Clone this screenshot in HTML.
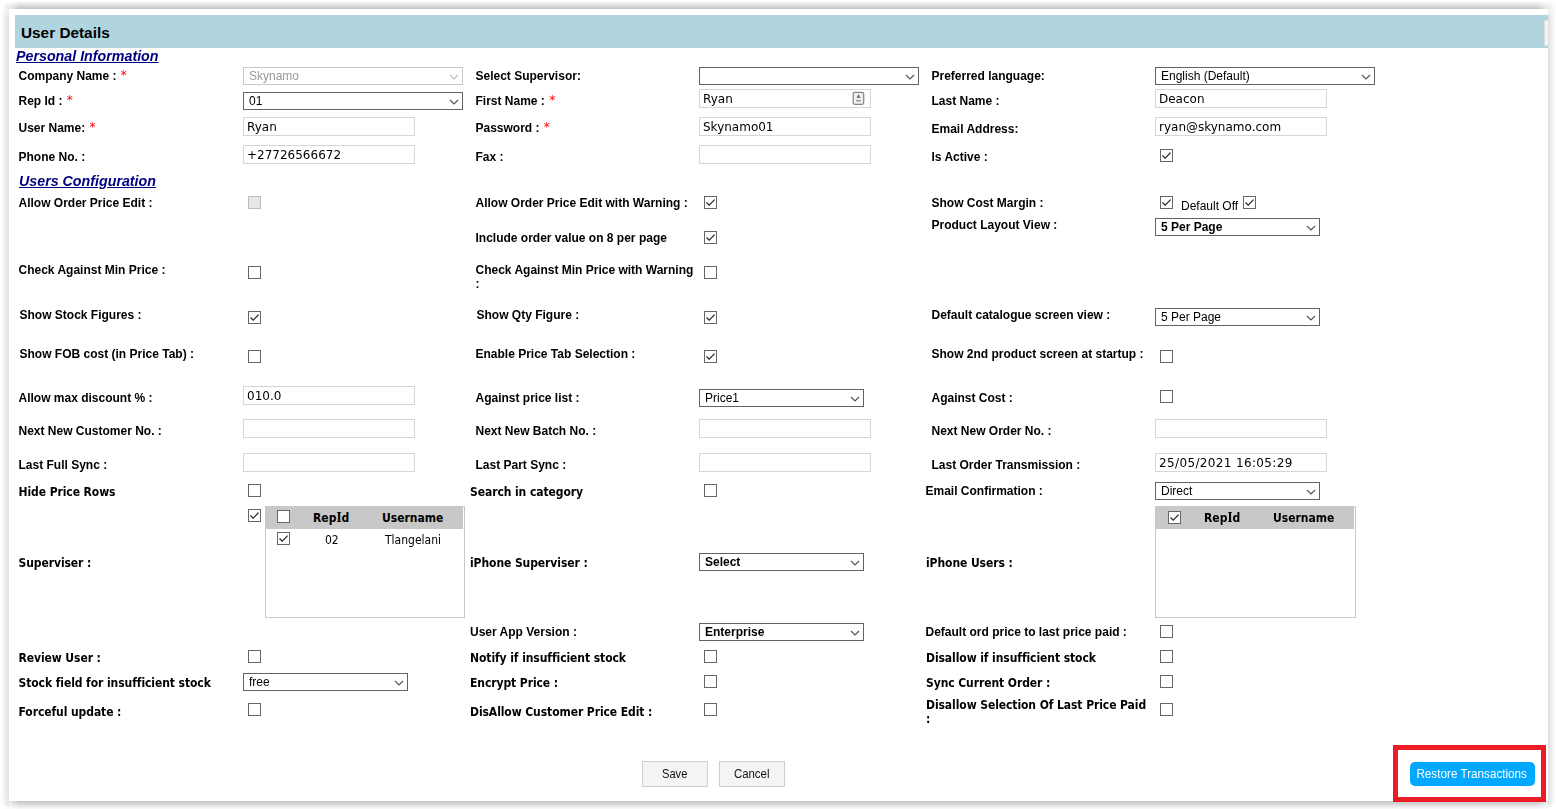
<!DOCTYPE html>
<html lang="en">
<head>
<meta charset="utf-8">
<title>User Details</title>
<style>
html,body{margin:0;padding:0;}
body{width:1556px;height:809px;position:relative;overflow:hidden;background:#fff;font-family:"Liberation Sans",sans-serif;font-size:12px;color:#000;}
#shadow{position:absolute;left:9px;top:9px;width:1539px;height:792px;background:#fff;}
.sh{position:absolute;}
#shT{left:1px;top:1px;width:1555px;height:8px;background:linear-gradient(to top,#c2c2c2,#fff);-webkit-mask-image:linear-gradient(to right,transparent 2px,#000 19px,#000 1536px,transparent 1553px);mask-image:linear-gradient(to right,transparent 2px,#000 19px,#000 1536px,transparent 1553px);}
#shB{left:1px;top:801px;width:1555px;height:8px;background:linear-gradient(to bottom,#c2c2c2,#fbfbfb);-webkit-mask-image:linear-gradient(to right,transparent 2px,#000 19px,#000 1536px,transparent 1553px);mask-image:linear-gradient(to right,transparent 2px,#000 19px,#000 1536px,transparent 1553px);}
#shL{left:1px;top:1px;width:8px;height:808px;background:linear-gradient(to left,#e0e0e0,#fff);mix-blend-mode:multiply;-webkit-mask-image:linear-gradient(to bottom,transparent 2px,#000 16px,#000 796px,transparent 807px);mask-image:linear-gradient(to bottom,transparent 2px,#000 16px,#000 796px,transparent 807px);}
#shR{left:1548px;top:1px;width:8px;height:808px;background:linear-gradient(to right,#e0e0e0,#fff);mix-blend-mode:multiply;-webkit-mask-image:linear-gradient(to bottom,transparent 2px,#000 16px,#000 796px,transparent 807px);mask-image:linear-gradient(to bottom,transparent 2px,#000 16px,#000 796px,transparent 807px);}
#hdr{position:absolute;left:15px;top:15px;width:1533px;height:33px;background:#b0d5de;}
#hdr span{position:absolute;left:6px;top:9px;font-weight:bold;font-size:15.35px;line-height:18px;white-space:nowrap;}
#hdrbox{position:absolute;left:1544px;top:20px;width:4px;height:26px;background:#f4f4f4;border:1px solid #ddd;border-right:0;box-sizing:border-box;}
.sec{position:absolute;font-weight:bold;font-style:italic;text-decoration:underline;color:#000080;font-size:14.25px;line-height:16px;white-space:nowrap;}
.l{position:absolute;font-weight:bold;font-size:12px;line-height:14px;white-space:nowrap;}
.l i{font-style:normal;color:#f00;font-weight:normal;font-family:"DejaVu Sans",sans-serif;font-size:12px;margin-left:1px;position:relative;top:-1px;}
.t{position:absolute;font-family:"DejaVu Sans Condensed","DejaVu Sans",sans-serif;font-weight:bold;font-size:12px;line-height:14px;white-space:nowrap;letter-spacing:-.08px;}
.n{position:absolute;font-size:12px;line-height:14px;white-space:nowrap;}
.in{position:absolute;box-sizing:border-box;height:19px;width:172px;border:1px solid #d6d6d6;background:#fff;font-family:"DejaVu Sans",sans-serif;font-size:12px;line-height:15px;padding:2px 0 0 3px;white-space:nowrap;overflow:hidden;}
.se{position:absolute;box-sizing:border-box;height:18px;border:1px solid #626262;background:#fff;font-size:12px;line-height:15px;padding:1px 0 0 5px;white-space:nowrap;overflow:hidden;}
.se.dis{border-color:#c8c8c8;color:#999;}
.se svg{position:absolute;right:3px;top:6px;}
.cb{position:absolute;box-sizing:border-box;width:13px;height:13px;border:1px solid #666;background:#fff;}
.cb.dis{border-color:#bdbdbd;background:#e6e6e6;}
.cb.hov{background:#f1f1f1;}
.cb svg{position:absolute;left:0;top:0;}
.grid{position:absolute;box-sizing:border-box;border:1px solid #c8c8c8;background:#fff;}
.gh{position:absolute;left:0;top:0;right:1px;height:22px;background:#c8c8c8;}
.gt{position:absolute;font-family:"DejaVu Sans Condensed","DejaVu Sans",sans-serif;font-size:12px;line-height:14px;white-space:nowrap;}
.btn{position:absolute;box-sizing:border-box;border:1px solid #cfcfcf;background:#f4f4f4;font-size:12px;line-height:14px;text-align:center;color:#111;}
#red{position:absolute;left:1393px;top:745px;width:153px;height:57px;box-sizing:border-box;border:5px solid #ed1c24;}
#rt{position:absolute;left:1409.5px;top:762px;width:125px;height:24px;border-radius:5px;background:#00a8ff;color:#fff;font-size:12px;line-height:24px;text-align:center;white-space:nowrap;}
</style>
</head>
<body>
<div class="sh" id="shT"></div><div class="sh" id="shB"></div><div class="sh" id="shL"></div><div class="sh" id="shR"></div><div id="shadow"></div>
<div id="page">
<div id="hdr"><span>User Details</span></div><div id="hdrbox"></div>
<div class="sec" style="left:16px;top:48px">Personal Information</div>
<div class="l" style="left:18.5px;top:69px">Company Name : <i>*</i></div>
<div class="se dis" style="left:243px;top:67px;width:220px;height:18px;">Skynamo<svg width="10" height="6" viewBox="0 0 10 6"><path d="M1 1 L5 5 L9 1" fill="none" stroke="#bbb" stroke-width="1.1"/></svg></div>
<div class="l" style="left:18.5px;top:94px">Rep Id : <i>*</i></div>
<div class="se" style="left:243px;top:92px;width:220px;height:18px;">01<svg width="10" height="6" viewBox="0 0 10 6"><path d="M1 1 L5 5 L9 1" fill="none" stroke="#555" stroke-width="1.2"/></svg></div>
<div class="l" style="left:18.5px;top:121px">User Name: <i>*</i></div>
<div class="in" style="left:243px;top:117px;width:172px">Ryan</div>
<div class="l" style="left:18.5px;top:150px">Phone No. :</div>
<div class="in" style="left:243px;top:145px;width:172px">+27726566672</div>
<div class="l" style="left:475.5px;top:69px">Select Supervisor:</div>
<div class="se" style="left:699px;top:67px;width:220px;height:18px;"><svg width="10" height="6" viewBox="0 0 10 6"><path d="M1 1 L5 5 L9 1" fill="none" stroke="#555" stroke-width="1.2"/></svg></div>
<div class="l" style="left:475.5px;top:94px">First Name : <i>*</i></div>
<div class="in" style="left:699px;top:89px;width:172px">Ryan</div>
<svg style="position:absolute;left:852px;top:91px" width="13" height="15" viewBox="0 0 13 15"><rect x="1.2" y="1.3" width="10.5" height="12.1" rx="1.8" fill="#f1f1f1" stroke="#858585" stroke-width="1.25"/><path d="M6.5 3 L8.6 7.1 L4.4 7.1 Z" fill="#7a7a7a"/><rect x="4.2" y="8.9" width="4.7" height="1.6" fill="#9a9a9a"/></svg>
<div class="l" style="left:475.5px;top:121px">Password : <i>*</i></div>
<div class="in" style="left:699px;top:117px;width:172px">Skynamo01</div>
<div class="l" style="left:475.5px;top:150px">Fax :</div>
<div class="in" style="left:699px;top:145px;width:172px"></div>
<div class="l" style="left:931.5px;top:69px">Preferred language:</div>
<div class="se" style="left:1155px;top:67px;width:220px;height:18px;">English (Default)<svg width="10" height="6" viewBox="0 0 10 6"><path d="M1 1 L5 5 L9 1" fill="none" stroke="#555" stroke-width="1.2"/></svg></div>
<div class="l" style="left:931.5px;top:94px">Last Name :</div>
<div class="in" style="left:1155px;top:89px;width:172px">Deacon</div>
<div class="l" style="left:931.5px;top:122px">Email Address:</div>
<div class="in" style="left:1155px;top:117px;width:172px">ryan@skynamo.com</div>
<div class="l" style="left:931.5px;top:150px">Is Active :</div>
<div class="cb " style="left:1160px;top:149px"><svg width="11" height="11" viewBox="0 0 11 11"><path d="M1.5 5.5 L4.2 8.2 L9.6 2.6" fill="none" stroke="#222" stroke-width="1.15"/></svg></div>
<div class="sec" style="left:19px;top:173px">Users Configuration</div>
<div class="l" style="left:18.5px;top:196px">Allow Order Price Edit :</div>
<div class="cb dis" style="left:248px;top:196px"></div>
<div class="l" style="left:475.5px;top:196px">Allow Order Price Edit with Warning :</div>
<div class="cb " style="left:704px;top:196px"><svg width="11" height="11" viewBox="0 0 11 11"><path d="M1.5 5.5 L4.2 8.2 L9.6 2.6" fill="none" stroke="#222" stroke-width="1.15"/></svg></div>
<div class="l" style="left:475.5px;top:231px">Include order value on 8 per page</div>
<div class="cb " style="left:704px;top:231px"><svg width="11" height="11" viewBox="0 0 11 11"><path d="M1.5 5.5 L4.2 8.2 L9.6 2.6" fill="none" stroke="#222" stroke-width="1.15"/></svg></div>
<div class="l" style="left:931.5px;top:196px">Show Cost Margin :</div>
<div class="cb " style="left:1160px;top:196px"><svg width="11" height="11" viewBox="0 0 11 11"><path d="M1.5 5.5 L4.2 8.2 L9.6 2.6" fill="none" stroke="#222" stroke-width="1.15"/></svg></div>
<div class="n" style="left:1181px;top:199px">Default Off</div>
<div class="cb " style="left:1243px;top:196px"><svg width="11" height="11" viewBox="0 0 11 11"><path d="M1.5 5.5 L4.2 8.2 L9.6 2.6" fill="none" stroke="#222" stroke-width="1.15"/></svg></div>
<div class="l" style="left:931.5px;top:218px">Product Layout View :</div>
<div class="se" style="left:1155px;top:218px;width:165px;height:18px;font-weight:bold;">5 Per Page<svg width="10" height="6" viewBox="0 0 10 6"><path d="M1 1 L5 5 L9 1" fill="none" stroke="#555" stroke-width="1.2"/></svg></div>
<div class="l" style="left:18.5px;top:263px">Check Against Min Price :</div>
<div class="cb " style="left:248px;top:266px"></div>
<div class="l" style="left:475.5px;top:263px">Check Against Min Price with Warning<br>:</div>
<div class="cb " style="left:704px;top:266px"></div>
<div class="l" style="left:19.5px;top:308px">Show Stock Figures :</div>
<div class="cb " style="left:248px;top:311px"><svg width="11" height="11" viewBox="0 0 11 11"><path d="M1.5 5.5 L4.2 8.2 L9.6 2.6" fill="none" stroke="#222" stroke-width="1.15"/></svg></div>
<div class="l" style="left:476.5px;top:308px">Show Qty Figure :</div>
<div class="cb " style="left:704px;top:311px"><svg width="11" height="11" viewBox="0 0 11 11"><path d="M1.5 5.5 L4.2 8.2 L9.6 2.6" fill="none" stroke="#222" stroke-width="1.15"/></svg></div>
<div class="l" style="left:931.5px;top:308px">Default catalogue screen view :</div>
<div class="se" style="left:1155px;top:308px;width:165px;height:18px;">5 Per Page<svg width="10" height="6" viewBox="0 0 10 6"><path d="M1 1 L5 5 L9 1" fill="none" stroke="#555" stroke-width="1.2"/></svg></div>
<div class="l" style="left:19.5px;top:347px">Show FOB cost (in Price Tab) :</div>
<div class="cb " style="left:248px;top:350px"></div>
<div class="l" style="left:475.5px;top:347px">Enable Price Tab Selection :</div>
<div class="cb " style="left:704px;top:350px"><svg width="11" height="11" viewBox="0 0 11 11"><path d="M1.5 5.5 L4.2 8.2 L9.6 2.6" fill="none" stroke="#222" stroke-width="1.15"/></svg></div>
<div class="l" style="left:931.5px;top:347px">Show 2nd product screen at startup :</div>
<div class="cb " style="left:1160px;top:350px"></div>
<div class="l" style="left:18.5px;top:391px">Allow max discount % :</div>
<div class="in" style="left:243px;top:386px;width:172px">010.0</div>
<div class="l" style="left:475.5px;top:391px">Against price list :</div>
<div class="se" style="left:699px;top:389px;width:165px;height:18px;">Price1<svg width="10" height="6" viewBox="0 0 10 6"><path d="M1 1 L5 5 L9 1" fill="none" stroke="#555" stroke-width="1.2"/></svg></div>
<div class="l" style="left:931.5px;top:391px">Against Cost :</div>
<div class="cb " style="left:1160px;top:390px"></div>
<div class="l" style="left:18.5px;top:424px">Next New Customer No. :</div>
<div class="in" style="left:243px;top:419px;width:172px"></div>
<div class="l" style="left:475.5px;top:424px">Next New Batch No. :</div>
<div class="in" style="left:699px;top:419px;width:172px"></div>
<div class="l" style="left:931.5px;top:424px">Next New Order No. :</div>
<div class="in" style="left:1155px;top:419px;width:172px"></div>
<div class="l" style="left:18.5px;top:458px">Last Full Sync :</div>
<div class="in" style="left:243px;top:453px;width:172px"></div>
<div class="l" style="left:475.5px;top:458px">Last Part Sync :</div>
<div class="in" style="left:699px;top:453px;width:172px"></div>
<div class="l" style="left:931.5px;top:458px">Last Order Transmission :</div>
<div class="in" style="left:1155px;top:453px;width:172px"><span style="letter-spacing:.36px">25/05/2021 16:05:29</span></div>
<div class="t" style="left:18.5px;top:485px">Hide Price Rows</div>
<div class="cb " style="left:248px;top:484px"></div>
<div class="t" style="left:470px;top:485px">Search in category</div>
<div class="cb " style="left:704px;top:484px"></div>
<div class="l" style="left:925.5px;top:484px">Email Confirmation :</div>
<div class="se" style="left:1155px;top:482px;width:165px;height:18px;">Direct<svg width="10" height="6" viewBox="0 0 10 6"><path d="M1 1 L5 5 L9 1" fill="none" stroke="#555" stroke-width="1.2"/></svg></div>
<div class="cb " style="left:248px;top:509px"><svg width="11" height="11" viewBox="0 0 11 11"><path d="M1.5 5.5 L4.2 8.2 L9.6 2.6" fill="none" stroke="#222" stroke-width="1.15"/></svg></div>
<div class="grid" style="left:265px;top:506px;width:200px;height:112px"><div class="gh"></div></div>
<div class="cb " style="left:277px;top:510px"></div>
<div class="gt" style="left:313px;top:511px;font-weight:bold">Rep<span style="font-family:'DejaVu Serif Condensed','DejaVu Serif',serif">I</span>d</div>
<div class="gt" style="left:382px;top:511px;font-weight:bold">Username</div>
<div class="cb " style="left:277px;top:532px"><svg width="11" height="11" viewBox="0 0 11 11"><path d="M1.5 5.5 L4.2 8.2 L9.6 2.6" fill="none" stroke="#222" stroke-width="1.15"/></svg></div>
<div class="gt" style="left:325px;top:533px">02</div>
<div class="gt" style="left:385px;top:533px">Tlangelani</div>
<div class="grid" style="left:1155px;top:506px;width:201px;height:112px"><div class="gh"></div></div>
<div class="cb " style="left:1168px;top:511px"><svg width="11" height="11" viewBox="0 0 11 11"><path d="M1.5 5.5 L4.2 8.2 L9.6 2.6" fill="none" stroke="#222" stroke-width="1.15"/></svg></div>
<div class="gt" style="left:1204px;top:511px;font-weight:bold">Rep<span style="font-family:'DejaVu Serif Condensed','DejaVu Serif',serif">I</span>d</div>
<div class="gt" style="left:1273px;top:511px;font-weight:bold">Username</div>
<div class="t" style="left:18.5px;top:556px">Superviser :</div>
<div class="t" style="left:470px;top:556px">iPhone Superviser :</div>
<div class="se" style="left:699px;top:553px;width:165px;height:18px;font-weight:bold;">Select<svg width="10" height="6" viewBox="0 0 10 6"><path d="M1 1 L5 5 L9 1" fill="none" stroke="#555" stroke-width="1.2"/></svg></div>
<div class="t" style="left:926px;top:556px">iPhone Users :</div>
<div class="l" style="left:470px;top:625px">User App Version :</div>
<div class="se" style="left:699px;top:623px;width:165px;height:18px;font-weight:bold;">Enterprise<svg width="10" height="6" viewBox="0 0 10 6"><path d="M1 1 L5 5 L9 1" fill="none" stroke="#555" stroke-width="1.2"/></svg></div>
<div class="l" style="left:925.5px;top:625px">Default ord price to last price paid :</div>
<div class="cb " style="left:1160px;top:625px"></div>
<div class="t" style="left:18.5px;top:651px">Review User :</div>
<div class="cb " style="left:248px;top:650px"></div>
<div class="t" style="left:470px;top:651px">Notify if insufficient stock</div>
<div class="cb " style="left:704px;top:650px"></div>
<div class="t" style="left:926px;top:651px">Disallow if insufficient stock</div>
<div class="cb " style="left:1160px;top:650px"></div>
<div class="t" style="left:18.5px;top:676px">Stock field for insufficient stock</div>
<div class="se" style="left:243px;top:673px;width:165px;height:18px;">free<svg width="10" height="6" viewBox="0 0 10 6"><path d="M1 1 L5 5 L9 1" fill="none" stroke="#555" stroke-width="1.2"/></svg></div>
<div class="t" style="left:470px;top:676px">Encrypt Price :</div>
<div class="cb " style="left:704px;top:675px"></div>
<div class="t" style="left:926px;top:676px">Sync Current Order :</div>
<div class="cb " style="left:1160px;top:675px"></div>
<div class="t" style="left:18.5px;top:705px">Forceful update :</div>
<div class="cb " style="left:248px;top:703px"></div>
<div class="t" style="left:470px;top:705px">DisAllow Customer Price Edit :</div>
<div class="cb " style="left:704px;top:703px"></div>
<div class="t" style="left:926px;top:698px">Disallow Selection Of Last Price Paid<br>:</div>
<div class="cb " style="left:1160px;top:703px"></div>
<div class="btn" style="left:642px;top:761px;width:66px;height:26px;padding-top:5px"><span style="display:inline-block;transform:scaleX(.93)">Save</span></div>
<div class="btn" style="left:719px;top:761px;width:66px;height:26px;padding-top:5px"><span style="display:inline-block;transform:scaleX(.95)">Cancel</span></div>
<div id="red"></div><div id="rt"><span style="display:inline-block;transform:scaleX(.975)">Restore Transactions</span></div>
</div>
</body>
</html>
